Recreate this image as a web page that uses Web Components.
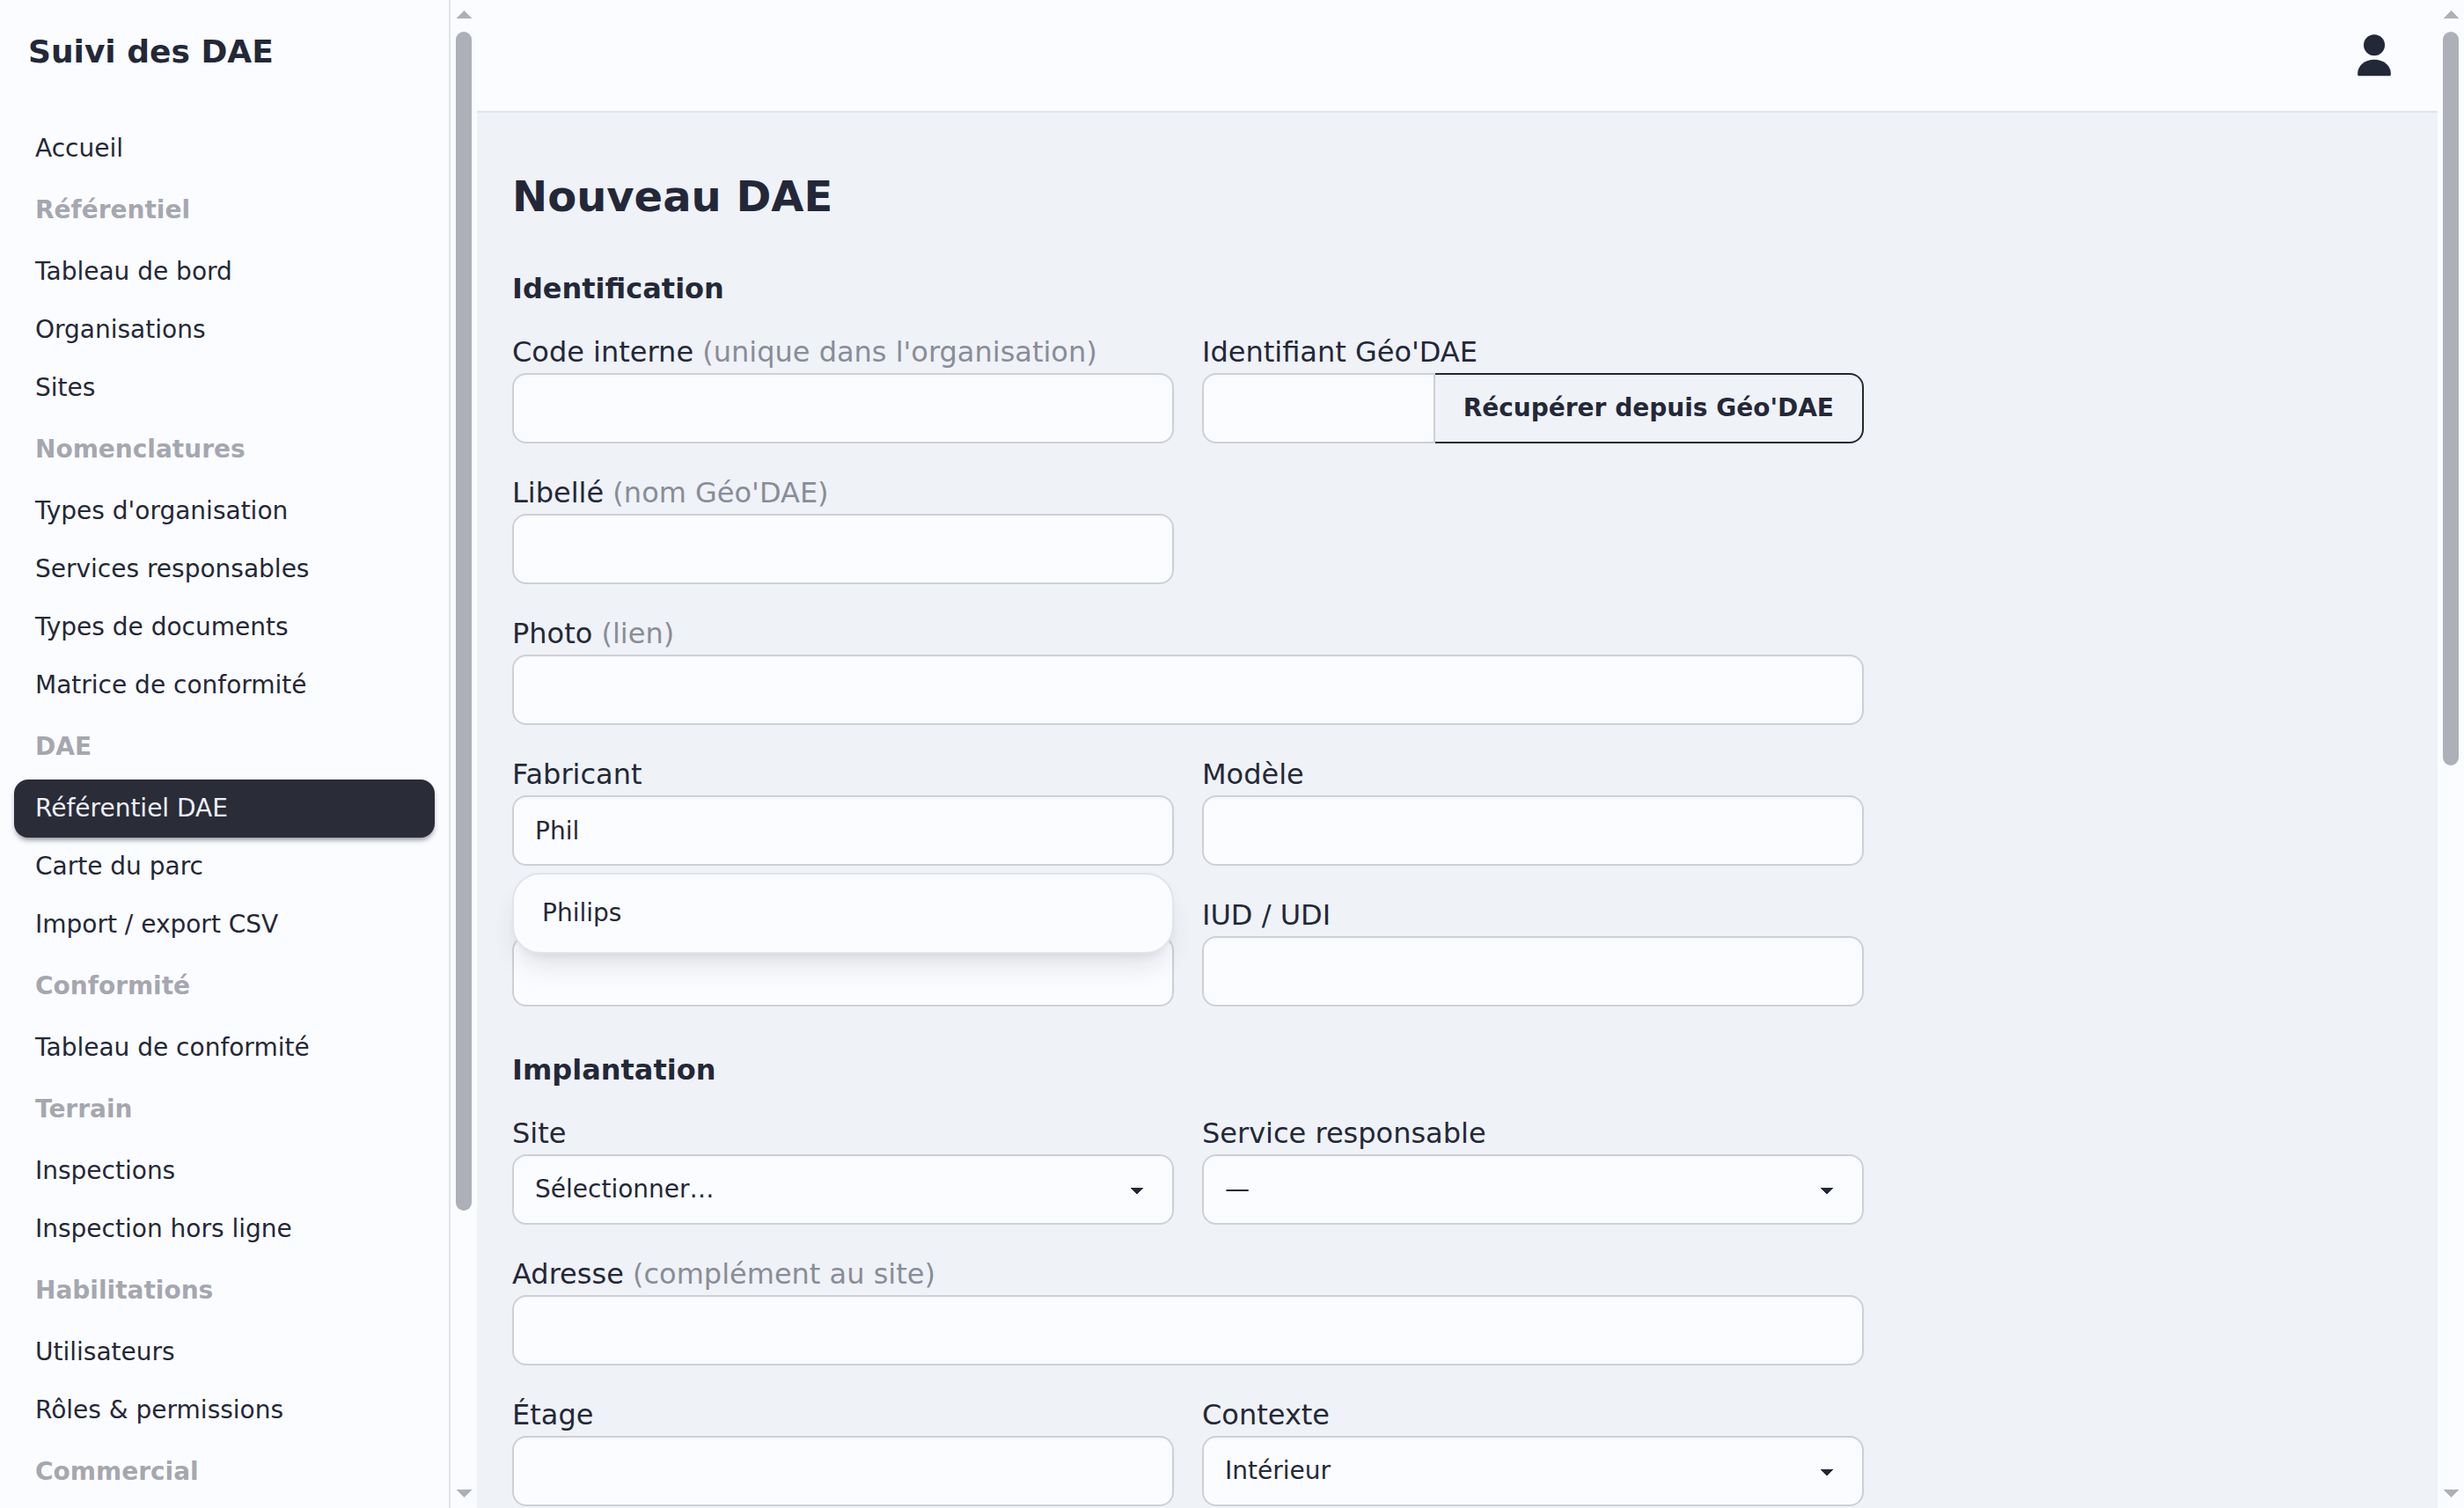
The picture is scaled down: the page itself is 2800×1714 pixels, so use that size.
<!DOCTYPE html>
<html lang="fr">
<head>
<meta charset="utf-8">
<title>Nouveau DAE</title>
<style>
  html, body { margin: 0; height: 100%; overflow: hidden; }
  body {
    --base-100: #fbfcff;
    --base-200: #eff2f7;
    --line: #e2e3ed;
    --field-line: #cfd0d6;
    --ink: #232838;
    --thumb: #aeb0b9;
    --neutral: #2a2c38;
    font-family: "DejaVu Sans", sans-serif;
    font-size: 32px;
    line-height: 48px;
    color: var(--ink);
    background: var(--base-200);
  }
</style>
</head>
<body>
<app-shell>
  <side-nav slot="aside" heading="Suivi des DAE">
    <nav-item>Accueil</nav-item>
    <nav-title>Référentiel</nav-title>
    <nav-item>Tableau de bord</nav-item>
    <nav-item>Organisations</nav-item>
    <nav-item>Sites</nav-item>
    <nav-title>Nomenclatures</nav-title>
    <nav-item>Types d'organisation</nav-item>
    <nav-item>Services responsables</nav-item>
    <nav-item>Types de documents</nav-item>
    <nav-item>Matrice de conformité</nav-item>
    <nav-title>DAE</nav-title>
    <nav-item active>Référentiel DAE</nav-item>
    <nav-item>Carte du parc</nav-item>
    <nav-item>Import / export CSV</nav-item>
    <nav-title>Conformité</nav-title>
    <nav-item>Tableau de conformité</nav-item>
    <nav-title>Terrain</nav-title>
    <nav-item>Inspections</nav-item>
    <nav-item>Inspection hors ligne</nav-item>
    <nav-title>Habilitations</nav-title>
    <nav-item>Utilisateurs</nav-item>
    <nav-item>Rôles &amp; permissions</nav-item>
    <nav-title>Commercial</nav-title>
  </side-nav>
  <scroll-rail slot="aside" style="--thumb-size:1340px"></scroll-rail>
  <top-bar slot="header"></top-bar>
  <page-form heading="Nouveau DAE">
    <form-section heading="Identification">
      <form-field label="Code interne" hint="(unique dans l'organisation)"><text-box></text-box></form-field>
      <form-field label="Identifiant Géo'DAE"><text-box action="Récupérer depuis Géo'DAE"></text-box></form-field>
      <form-field label="Libellé" hint="(nom Géo'DAE)"><text-box></text-box></form-field>
      <form-field label="Photo" hint="(lien)" wide><text-box></text-box></form-field>
      <form-field label="Fabricant">
        <text-box>Phil</text-box>
        <suggestion-list slot="popup">Philips</suggestion-list>
      </form-field>
      <form-field label="Modèle"><text-box></text-box></form-field>
      <form-field><text-box></text-box></form-field>
      <form-field label="IUD / UDI"><text-box></text-box></form-field>
    </form-section>
    <form-section heading="Implantation">
      <form-field label="Site"><text-box select>Sélectionner…</text-box></form-field>
      <form-field label="Service responsable"><text-box select>—</text-box></form-field>
      <form-field label="Adresse" hint="(complément au site)" wide><text-box></text-box></form-field>
      <form-field label="Étage"><text-box></text-box></form-field>
      <form-field label="Contexte"><text-box select>Intérieur</text-box></form-field>
    </form-section>
  </page-form>
  <scroll-rail slot="end" style="--thumb-size:834px"></scroll-rail>
</app-shell>

<script>
const define = (name, render) => customElements.define(name, class extends HTMLElement {
  constructor() {
    super();
    this.attachShadow({ mode: 'open' }).innerHTML =
      '<style>*{box-sizing:border-box}</style>' + render(this);
  }
});
const attr = (el, name) => (el.getAttribute(name) || '').replace(/&/g, '&amp;').replace(/</g, '&lt;');

define('app-shell', () => `
  <style>
    :host { display: flex; height: 1714px; overflow: hidden; }
    .aside { display: flex; flex: none; }
    .main { flex: 1; min-width: 0; display: flex; flex-direction: column; background: var(--base-200); }
  </style>
  <div class="aside"><slot name="aside"></slot></div>
  <div class="main"><slot name="header"></slot><slot></slot></div>
  <slot name="end"></slot>`);

define('side-nav', el => `
  <style>
    :host { display: flex; flex-direction: column; box-sizing: border-box; width: 512px; height: 100%;
      overflow: hidden; background: var(--base-100); border-right: 2px solid var(--line); }
    header { flex: none; height: 120px; padding: 31px 32px 0; font-size: 36px; line-height: 56px; font-weight: 700; }
    nav { display: flex; flex-direction: column; padding: 16px; }
  </style>
  <header>${attr(el, 'heading')}</header>
  <nav><slot></slot></nav>`);

define('nav-item', () => `
  <style>
    :host { display: block; flex: none; padding: 12px 24px; font-size: 28px; line-height: 42px;
      border-radius: 16px; white-space: nowrap; }
    :host([active]) { background: var(--neutral); color: #edf0fb; box-shadow: 0 4px 6px -2px rgba(42,44,56,.6); }
  </style>
  <slot></slot>`);

define('nav-title', () => `
  <style>
    :host { display: block; flex: none; padding: 16px 24px; font-size: 28px; line-height: 42px;
      font-weight: 700; color: #a5a7b0; white-space: nowrap; }
  </style>
  <slot></slot>`);

define('scroll-rail', () => `
  <style>
    :host { display: flex; flex-direction: column; align-items: center; flex: none; box-sizing: border-box;
      width: 30px; height: 100%; padding: 12px 6px; background: var(--base-100); }
    svg { display: block; fill: var(--thumb); width: 18px; height: 9px; flex: none; }
    .thumb { width: 18px; height: var(--thumb-size); margin-top: 15px; border-radius: 9px; background: var(--thumb); }
    .gap { flex: 1; }
  </style>
  <svg viewBox="0 0 18 9" shape-rendering="crispEdges"><path d="M0 9 9 0l9 9z"/></svg>
  <div class="thumb"></div>
  <div class="gap"></div>
  <svg viewBox="0 0 18 9" shape-rendering="crispEdges"><path d="M0 0h18L9 9z"/></svg>`);

define('top-bar', () => `
  <style>
    :host { display: flex; flex: none; box-sizing: border-box; justify-content: flex-end; align-items: center;
      height: 128px; padding: 0 48px; background: var(--base-100); border-bottom: 2px solid var(--line); }
    svg { display: block; width: 48px; height: 48px; fill: var(--ink); }
  </style>
  <svg viewBox="0 0 48 48"><circle cx="24" cy="12.2" r="12"/><path d="M5.2 44.2C5.2 35.500 13.500 28.700 24 28.700s18.800 6.800 18.800 15.500v1.700a1.400 1.400 0 0 1-1.400 1.400H6.600a1.400 1.400 0 0 1-1.400-1.400z"/></svg>`);

define('page-form', el => `
  <style>
    :host { display: block; padding: 63px 40px 0; }
    h1 { margin: 0 0 49px; font-size: 48px; line-height: 64px; font-weight: 700; }
    .body { display: flex; flex-direction: column; gap: 48px; width: 1536px; }
  </style>
  <h1>${attr(el, 'heading')}</h1>
  <div class="body"><slot></slot></div>`);

define('form-section', el => `
  <style>
    :host { display: block; }
    h2 { margin: 0 0 24px; font-size: 32px; line-height: 48px; font-weight: 700; }
    .grid { display: grid; grid-template-columns: 1fr 1fr; gap: 32px; }
  </style>
  <h2>${attr(el, 'heading')}</h2>
  <div class="grid"><slot></slot></div>`);

define('form-field', el => `
  <style>
    :host { display: block; position: relative; }
    :host([wide]) { grid-column: 1 / -1; }
    .label { height: 48px; white-space: nowrap; }
    .hint { color: #898d97; }
    ::slotted([slot=popup]) { position: absolute; left: 0; right: 0; top: 136px; z-index: 2; }
  </style>
  <div class="label">${attr(el, 'label')}${el.hasAttribute('hint') ? ` <span class="hint">${attr(el, 'hint')}</span>` : ''}</div>
  <slot></slot><slot name="popup"></slot>`);

define('text-box', el => `
  <style>
    :host { display: flex; height: 80px; font-size: 28px; line-height: 42px; }
    .box { flex: 1; display: flex; align-items: center; padding: 2px 24px 0; background-color: var(--base-100);
      border: 2px solid var(--field-line); border-radius: 16px; box-shadow: inset 0 2px 2px rgba(0,0,0,.02); }
    :host([select]) .box {
      padding-top: 0;
      background-image: linear-gradient(45deg, #0000 50%, var(--ink) 50%), linear-gradient(135deg, var(--ink) 50%, #0000 50%);
      background-position: calc(100% - 40px) calc(2px + 50%), calc(100% - 32.2px) calc(2px + 50%);
      background-size: 8px 8px; background-repeat: no-repeat; }
    :host([action]) .box { border-radius: 16px 0 0 16px; }
    .action { display: flex; align-items: center; padding: 0 32px; font-weight: 700; white-space: nowrap;
      border: 2px solid var(--ink); border-left: 0; border-radius: 0 16px 16px 0; }
  </style>
  <div class="box"><slot></slot></div>
  ${el.hasAttribute('action') ? `<div class="action">${attr(el, 'action')}</div>` : ''}`);

define('suggestion-list', () => `
  <style>
    :host { display: flex; box-sizing: border-box; height: 92px; padding: 8px; font-size: 28px; line-height: 42px;
      background: var(--base-100); border: 2px solid var(--line); border-radius: 32px;
      box-shadow: 0 20px 30px -6px rgba(0,0,0,.1), 0 8px 12px -8px rgba(0,0,0,.1); }
    .option { flex: 1; display: flex; align-items: center; padding: 0 24px; }
  </style>
  <div class="option"><slot></slot></div>`);
</script>
</body>
</html>
